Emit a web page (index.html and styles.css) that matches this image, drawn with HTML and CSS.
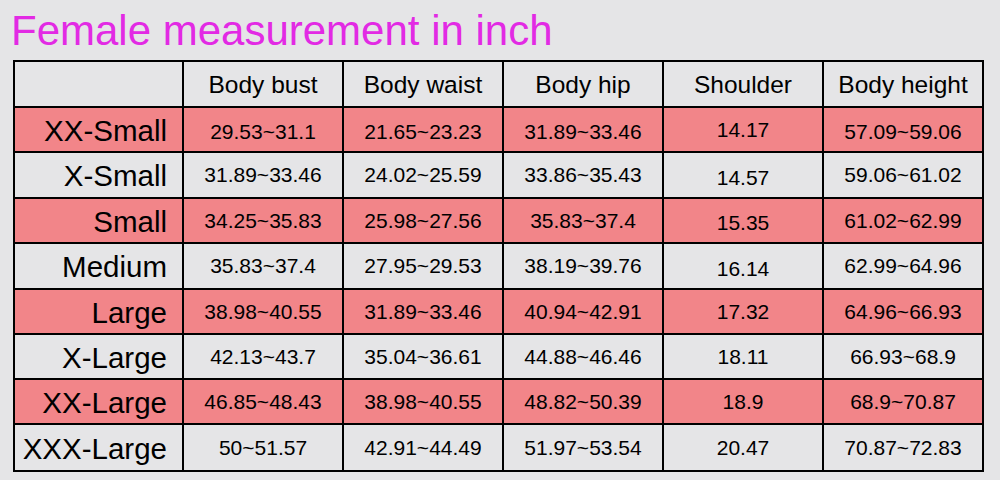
FILE: index.html
```html
<!DOCTYPE html>
<html>
<head>
<meta charset="utf-8">
<link rel="stylesheet" href="styles.css">
</head>
<body>
<div class="page">
  <h1 class="title">Female measurement in inch</h1>
  <div class="chart">
    <div class="cell head"></div>
    <div class="cell head">Body bust</div>
    <div class="cell head">Body waist</div>
    <div class="cell head">Body hip</div>
    <div class="cell head">Shoulder</div>
    <div class="cell head">Body height</div>

    <div class="cell size pink">XX-Small</div>
    <div class="cell val pink low">29.53~31.1</div>
    <div class="cell val pink low">21.65~23.23</div>
    <div class="cell val pink low">31.89~33.46</div>
    <div class="cell val pink">14.17</div>
    <div class="cell val pink low">57.09~59.06</div>

    <div class="cell size">X-Small</div>
    <div class="cell val">31.89~33.46</div>
    <div class="cell val">24.02~25.59</div>
    <div class="cell val">33.86~35.43</div>
    <div class="cell val low">14.57</div>
    <div class="cell val">59.06~61.02</div>

    <div class="cell size pink">Small</div>
    <div class="cell val pink">34.25~35.83</div>
    <div class="cell val pink">25.98~27.56</div>
    <div class="cell val pink">35.83~37.4</div>
    <div class="cell val pink low">15.35</div>
    <div class="cell val pink">61.02~62.99</div>

    <div class="cell size">Medium</div>
    <div class="cell val">35.83~37.4</div>
    <div class="cell val">27.95~29.53</div>
    <div class="cell val">38.19~39.76</div>
    <div class="cell val low">16.14</div>
    <div class="cell val">62.99~64.96</div>

    <div class="cell size pink">Large</div>
    <div class="cell val pink">38.98~40.55</div>
    <div class="cell val pink">31.89~33.46</div>
    <div class="cell val pink">40.94~42.91</div>
    <div class="cell val pink">17.32</div>
    <div class="cell val pink">64.96~66.93</div>

    <div class="cell size">X-Large</div>
    <div class="cell val">42.13~43.7</div>
    <div class="cell val">35.04~36.61</div>
    <div class="cell val">44.88~46.46</div>
    <div class="cell val">18.11</div>
    <div class="cell val">66.93~68.9</div>

    <div class="cell size pink">XX-Large</div>
    <div class="cell val pink">46.85~48.43</div>
    <div class="cell val pink">38.98~40.55</div>
    <div class="cell val pink">48.82~50.39</div>
    <div class="cell val pink">18.9</div>
    <div class="cell val pink">68.9~70.87</div>

    <div class="cell size">XXX-Large</div>
    <div class="cell val">50~51.57</div>
    <div class="cell val">42.91~44.49</div>
    <div class="cell val">51.97~53.54</div>
    <div class="cell val">20.47</div>
    <div class="cell val">70.87~72.83</div>
  </div>
</div>
</body>
</html>
```

FILE: styles.css
```css
html, body {
  margin: 0;
  padding: 0;
  background: #e5e5e7;
}

.page {
  width: 1000px;
  height: 480px;
  box-sizing: border-box;
  padding: 9px 0 0 13px;
  font-family: "Liberation Sans", Arial, sans-serif;
  color: #000;
}

.title {
  margin: 0 0 7px -2px;
  font-size: 42px;
  line-height: 44px;
  font-weight: normal;
  color: #e22ae4;
  white-space: nowrap;
}

.chart {
  display: grid;
  width: 971px;
  box-sizing: border-box;
  grid-template-columns: 167px repeat(5, 158px);
  grid-template-rows: 44px 43px 44px 43px 44px 43px 43px 43px 45px;
  gap: 2px;
  padding: 2px;
  background: #000;
}

.cell {
  background: #e5e5e7;
  display: flex;
  align-items: center;
  justify-content: center;
  white-space: nowrap;
}

.cell.pink {
  background: #f28589;
}

.head {
  font-size: 24.5px;
  padding-top: 2px;
}

.size {
  justify-content: flex-end;
  padding-right: 15px;
  font-size: 29.5px;
  padding-top: 2px;
}

.val {
  font-size: 21px;
}

.val.low {
  padding-top: 5px;
}
```
